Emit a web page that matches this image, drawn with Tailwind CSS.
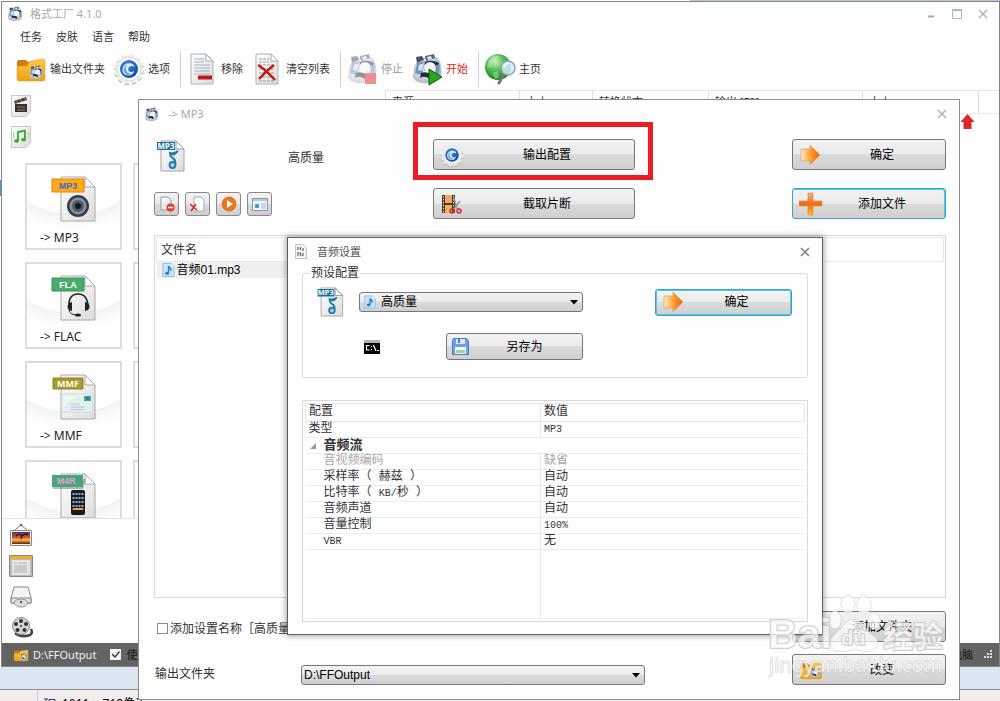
<!DOCTYPE html>
<html lang="zh-CN">
<head>
  <meta charset="UTF-8">
  <meta name="viewport" content="width=device-width, initial-scale=1.0">
  <title>格式工厂 4.1.0</title>
  <script src="https://cdn.jsdelivr.net/npm/@tailwindcss/browser@4"></script>
</head>
<body class="relative h-screen overflow-hidden bg-white font-['Noto_Sans','Noto_Sans_CJK_SC',sans-serif] text-[12px] leading-4 text-[#333]">

  <!-- shared icons -->
  <svg class="absolute h-0 w-0" aria-hidden="true">
    <defs>
      <linearGradient id="gFolder" x1="0" y1="0" x2="0" y2="1"><stop offset="0" stop-color="#fbc94a"/><stop offset="1" stop-color="#f0a010"/></linearGradient>
      <linearGradient id="gPage" x1="0" y1="0" x2="1" y2="1"><stop offset="0" stop-color="#fff"/><stop offset="1" stop-color="#dcdcdc"/></linearGradient>
      <linearGradient id="gArrow" x1="0" y1="0" x2="1" y2="0"><stop offset="0" stop-color="#ffe9c8"/><stop offset=".5" stop-color="#ffa030"/><stop offset="1" stop-color="#f85a00"/></linearGradient>
      <linearGradient id="gPlus" x1="0" y1="0" x2="0" y2="1"><stop offset="0" stop-color="#f9b08a"/><stop offset=".5" stop-color="#ee6a10"/><stop offset="1" stop-color="#fcc010"/></linearGradient>
      <linearGradient id="gSun" x1="0" y1="0" x2="0" y2="1"><stop offset="0" stop-color="#3b3a78"/><stop offset=".45" stop-color="#e2501c"/><stop offset=".65" stop-color="#ffc23c"/><stop offset="1" stop-color="#5a1a10"/></linearGradient>
      <radialGradient id="gGlobe" cx=".4" cy=".3" r=".7"><stop offset="0" stop-color="#c9f3c0"/><stop offset=".5" stop-color="#4fbb50"/><stop offset="1" stop-color="#178023"/></radialGradient>
      <radialGradient id="gBlue" cx=".4" cy=".3" r=".8"><stop offset="0" stop-color="#3d8fe0"/><stop offset="1" stop-color="#0a3f96"/></radialGradient>
      <radialGradient id="gRobot" cx=".4" cy=".4" r=".7"><stop offset="0" stop-color="#fff"/><stop offset="1" stop-color="#a9b2bd"/></radialGradient>
    </defs>
    <symbol id="robot" viewBox="0 0 32 32">
      <path d="M7 8Q3 12 3 20Q1 26 6 28Q14 32 24 28Q31 26 30 17Q30 9 26 5Q17 1 7 8Z" fill="url(#gRobot)" stroke="#a3abb5" stroke-width=".6"/>
      <path d="M5 4L11 3L13 7L6 10Z" fill="#4a525c"/>
      <path d="M14 3L23 1L24 5L15 8Z" fill="#5b636d"/>
      <path d="M16 4L20 3L21 6L17 7Z" fill="#dfe4ea"/>
      <path d="M6 10L14 8L11 22L4 20Z" fill="#6f95bf"/>
      <path d="M8 12L13 10L11 18L7 17Z" fill="#d4e6f8"/>
      <path d="M14 9Q21 6 28 10L26 16Q19 12 13 18Z" fill="#1c2b42"/>
      <circle cx="19" cy="15" r="6" fill="#f1f3f6"/>
      <path d="M25 12L29 12L28 22L24 21Z" fill="#6f95bf"/>
      <path d="M10 20Q16 18 21 22L19 26Q13 22 9 25Z" fill="#222c3a"/>
    </symbol>
    <symbol id="gear" viewBox="0 0 32 32">
      <circle cx="16" cy="17" r="13" fill="none" stroke="#a8a8a8" stroke-width="4" stroke-dasharray="4 2.800"/>
      <circle cx="16" cy="16" r="13" fill="#f6f6f6" stroke="#f0f0f0" stroke-width="4" stroke-dasharray="4 2.800"/>
      <circle cx="16" cy="16" r="12" fill="#f6f6f6" stroke="#c8c8c8" stroke-width=".6"/>
      <circle cx="16" cy="16" r="9" fill="url(#gBlue)"/>
      <path d="M10 20Q8 13 14 10.500Q20 9 22 14Q18.500 11.800 16 14Q14 16.500 16.500 18.500Q19 20 21 17.500Q20.500 22 16 22.500Q12 22.800 10 20Z" fill="#dcebfb"/>
      <path d="M11.500 20Q9.500 14 14.500 11.500Q11.500 15 13.500 18.500Q15.500 21.500 19 20.500Q15 23.500 11.500 20Z" fill="#5f9de0"/>
    </symbol>
    <symbol id="folder" viewBox="0 0 32 32">
      <path d="M2 9Q2 7 4 7H11L13 9H28Q30 9 30 11V26H2Z" fill="#d27b10"/>
      <path d="M3 13H12L15 8L28 6Q30 6 30 8V26Q30 28 28 28H4Q2 28 2 26V14Z" fill="url(#gFolder)" stroke="#e09a18" stroke-width=".5"/>
      <use href="#robot" x="13" y="12" width="16" height="15"/>
    </symbol>
    <symbol id="mp3file" viewBox="0 0 28 32">
      <path d="M4 1H19L27 9V31H4Z" fill="url(#gPage)" stroke="#a5a5a5"/>
      <path d="M19 1V9H27Z" fill="#fff" stroke="#999"/>
      <path d="M0 2H18V10H0Z" fill="#17709f"/>
      <text x="9" y="9" text-anchor="middle" font-family="Noto Sans" font-weight="bold" font-size="8" fill="#fff">MP3</text>
      <path d="M21 11Q18 14 13 13Q13 17 17 19Q19 21 18 25" fill="none" stroke="#1d7ba8" stroke-width="2"/>
      <path d="M14 14Q17 16 20 12" fill="none" stroke="#1d7ba8" stroke-width="1.500"/>
      <circle cx="15.500" cy="25" r="3" fill="#a9d3e6" stroke="#1d7ba8" stroke-width="1.800"/>
    </symbol>
    <symbol id="arrow" viewBox="0 0 24 24">
      <path d="M2 6H11V2L21 12L11 22V18H2Z" fill="url(#gArrow)" stroke="#c9a98a" stroke-width=".8"/>
    </symbol>
    <symbol id="note" viewBox="0 0 14 16">
      <path d="M1 1H10L13 4V15H1Z" fill="#cfe4fa" stroke="#8fb6de"/>
      <path d="M10 1V4H13Z" fill="#fff"/>
      <path d="M7 4V11M7 4Q10 6 9.500 9" fill="none" stroke="#0b7fd6" stroke-width="1.500"/>
      <ellipse cx="5.500" cy="11.500" rx="2.200" ry="1.700" fill="#0b7fd6"/>
    </symbol>
    <symbol id="page" viewBox="0 0 36 46">
      <path d="M1 1H25L35 11V45H1Z" fill="url(#gPage)" stroke="#aaa"/>
      <path d="M25 1V11H35Z" fill="#fff" stroke="#aaa"/>
    </symbol>
  </svg>

  <!-- what is left of the windows behind -->
  <div class="absolute inset-x-0 top-0 flex h-[2px] justify-end bg-white"><div class="w-[31%] bg-[#b7c6da]"></div></div>
  <div class="absolute left-0 top-[180px] h-4 w-px bg-[#3c96f5]"></div>
  <div class="absolute inset-x-0 bottom-0 flex h-[34px] flex-col bg-[#dce6f2]">
    <div class="mt-[22px] flex flex-1 items-start gap-[6px] overflow-hidden border-t border-[#8e8e8e] bg-[#f0edec] pl-[37px]">
      <span class="h-full w-px bg-[#ccc]"></span>
      <svg class="mt-[8px] h-3 w-3" viewBox="0 0 12 12"><path d="M0 1H4M2 1V12M5 1.500H11V12H5Z" fill="none" stroke="#24406e"/></svg>
      <span class="pt-[6px] text-[12px] text-black">1011 × 718像素</span>
    </div>
  </div>

  <!-- main window -->
  <main class="absolute bottom-[34px] left-px right-0 top-px flex flex-col border border-[#858585] bg-[#fefefe] text-[11px]">
    <header class="flex h-6 items-center pl-[5px] text-[#a8a8a8]">
      <svg class="h-4 w-4"><use href="#robot"/></svg>
      <h1 class="ml-[7px] flex-1">格式工厂 4.1.0</h1>
      <div class="flex items-center gap-[16px] pr-[11px]">
        <button aria-label="最小化"><svg class="h-[10px] w-[10px]" viewBox="0 0 10 10"><path d="M2 7.500H8" stroke="#aaa" stroke-width="2"/></svg></button>
        <button aria-label="最大化"><svg class="h-[10px] w-[10px]" viewBox="0 0 10 10"><path d="M.5 .5H9.500V9.500H.5Z M1 1.500H9" fill="none" stroke="#b5b5b5"/></svg></button>
        <button aria-label="关闭"><svg class="h-[10px] w-[10px]" viewBox="0 0 10 10"><path d="M1 1L9 9M9 1L1 9" stroke="#b0b0b0" stroke-width="1.400"/></svg></button>
      </div>
    </header>

    <nav class="flex h-[21px] items-center gap-[14px] pl-[18px]">
      <button>任务</button>
      <button>皮肤</button>
      <button>语言</button>
      <button>帮助</button>
    </nav>

    <div class="flex h-[43px] shrink-0 items-center gap-2 pl-[13px]">
      <button class="flex items-center gap-[3px]"><svg class="h-8 w-8"><use href="#folder"/></svg>输出文件夹</button>
      <button class="flex items-center gap-[3px]"><svg class="h-8 w-8"><use href="#gear"/></svg>选项</button>
      <span class="-mr-[3px] ml-[2px] h-9 w-px bg-[#d4d4d4]"></span>
      <button class="flex items-center gap-[3px]">
        <svg class="h-8 w-8" viewBox="0 0 32 32">
          <path d="M5 1H20L27 8V31H5Z" fill="url(#gPage)" stroke="#b0b0b0"/>
          <path d="M20 1V8H27Z" fill="#fff" stroke="#aaa"/>
          <path d="M8 6H18M8 9H18M8 12H24M8 15H24M8 18H24M8 21H24" stroke="#9fb3bd"/>
          <path d="M12 22.500H26V26.500H12Z" fill="#c01818"/>
        </svg>移除
      </button>
      <button class="flex items-center gap-[3px]">
        <svg class="h-8 w-8" viewBox="0 0 32 32">
          <path d="M5 1H20L27 8V31H5Z" fill="url(#gPage)" stroke="#b0b0b0"/>
          <path d="M20 1V8H27Z" fill="#fff" stroke="#aaa"/>
          <path d="M8 6H18M8 9H18M8 12H24M8 16H24M8 20H24M8 24H24M8 28H24" stroke="#999" stroke-dasharray="3 1"/>
          <path d="M7 12Q15 17 24 27M23 12Q15 18 8 26" fill="none" stroke="#c01c1c" stroke-width="2.600"/>
        </svg>清空列表
      </button>
      <span class="-mr-[3px] ml-[2px] h-9 w-px bg-[#d4d4d4]"></span>
      <button class="flex items-center gap-[3px] text-[#9a9a9a]">
        <svg class="h-8 w-8 opacity-50" viewBox="0 0 32 32"><use href="#robot"/><path d="M19 20H30V31H19Z" fill="#e02020"/></svg>停止
      </button>
      <button class="flex items-center gap-[3px] text-[#e02a12]">
        <svg class="h-8 w-8" viewBox="0 0 32 32"><use href="#robot"/><path d="M18 16L31 24L18 32Z" fill="#2aa81a" stroke="#0c5c08"/></svg>开始
      </button>
      <span class="-mr-[3px] ml-[2px] h-9 w-px bg-[#d4d4d4]"></span>
      <button class="flex items-center gap-[3px]">
        <svg class="h-8 w-8" viewBox="0 0 32 32">
          <circle cx="14" cy="14" r="13" fill="url(#gGlobe)"/>
          <path d="M5 7Q9 2 15 3L12 8L8 10L7 15L3 14Z M16 11L22 7L26 12L20 14Z M8 20L14 18L15 25L11 26Z" fill="#d8f5d0" opacity=".4"/>
          <path d="M20 21L15 30" stroke="#777" stroke-width="3" stroke-linecap="round"/>
          <circle cx="24" cy="15" r="7" fill="#d6eafa" fill-opacity=".85" stroke="#8aa2b5" stroke-width="1.500"/>
          <path d="M20 14Q21 10 25 10" fill="none" stroke="#fff" stroke-width="1.500"/>
        </svg>主页
      </button>
    </div>

    <div class="flex min-h-0 flex-1">
      <aside class="flex w-[383px] shrink-0 flex-col">
        <button aria-label="视频" class="flex h-[31px] items-center pl-[9px]">
          <svg class="h-[22px] w-[20px]" viewBox="0 0 20 22"><path d="M.5 .5H19.500V17L15 21.500H.5Z" fill="url(#gPage)" stroke="#c8c8c8"/><path d="M4 9H16V17H4Z" fill="#3a3026"/><path d="M3 6L15 2L16 5L4 9Z" fill="#4b4034"/><path d="M5 5.500L7 8M9 4L11 7M13 3L15 5.500M6 12H14M6 15H14" stroke="#a59c90" stroke-width=".8"/></svg>
        </button>
        <button aria-label="音频" class="flex h-[31px] items-center pl-[9px]">
          <svg class="h-[22px] w-[20px]" viewBox="0 0 20 22"><path d="M.5 .5H19.500V17L15 21.500H.5Z" fill="url(#gPage)" stroke="#c8c8c8"/><path d="M7 15V6L14 4.500V13.500" fill="none" stroke="#35a827" stroke-width="1.800"/><ellipse cx="5.500" cy="15" rx="2.400" ry="1.800" fill="#35a827"/><ellipse cx="12.500" cy="13.800" rx="2.400" ry="1.800" fill="#35a827"/><path d="M3 6Q1.500 9 3 12M17 6Q18.500 9 17 12" fill="none" stroke="#bbb"/></svg>
        </button>

        <div class="grid min-h-0 flex-1 auto-rows-[87px] grid-cols-[97px_97px] gap-x-[11px] gap-y-3 overflow-hidden border-b border-[#e2e2e2] pl-[23px] pt-[11px] text-[12px] text-[#222]">
          <button class="flex flex-col items-start border-2 border-[#dcdcdc] bg-[radial-gradient(ellipse_75%_60%_at_50%_0,#fff_97%,#f3f3f3_100%,#fff_130%)] pl-[13px] pt-[10px]">
            <svg class="h-[48px] w-[66px]" viewBox="0 0 66 48">
              <use href="#page" x="20" y="1" width="36" height="46"/>
              <path d="M12 4H44V17H12Z" fill="#ffab14" stroke="#d98a00"/>
              <text x="28" y="14" text-anchor="middle" font-family="Liberation Sans" font-weight="bold" font-size="9" fill="#4a63d0">MP3</text>
              <circle cx="38" cy="31" r="11" fill="#3a3d42"/><circle cx="38" cy="31" r="8.500" fill="#8593a4"/><circle cx="38" cy="31" r="6" fill="#4d5a68"/><circle cx="38" cy="31" r="3" fill="#12161b"/>
            </svg>
            <span class="mt-[7px]">-&gt; MP3</span>
          </button>
          <div class="border-2 border-[#dcdcdc]"></div>
          <button class="flex flex-col items-start border-2 border-[#dcdcdc] bg-[radial-gradient(ellipse_75%_60%_at_50%_0,#fff_97%,#f3f3f3_100%,#fff_130%)] pl-[13px] pt-[10px]">
            <svg class="h-[48px] w-[66px]" viewBox="0 0 66 48">
              <use href="#page" x="20" y="1" width="36" height="46"/>
              <path d="M12 4H44V17H12Z" fill="#4cab6c" stroke="#36905a"/>
              <text x="28" y="14" text-anchor="middle" font-family="Liberation Sans" font-weight="bold" font-size="9" fill="#fff">FLA</text>
              <path d="M29 34Q28 20 38 20Q48 20 48 34" fill="none" stroke="#222" stroke-width="1.600"/>
              <path d="M29 29L32 28V37L29 36Q26 33 29 29Z M48 29L45 28V37L48 36Q51 33 48 29Z" fill="#222"/>
              <path d="M29 36Q30 41 37 41" fill="none" stroke="#222"/><ellipse cx="38" cy="41" rx="3" ry="1.600" fill="#222"/>
            </svg>
            <span class="mt-[7px]">-&gt; FLAC</span>
          </button>
          <div class="border-2 border-[#dcdcdc]"></div>
          <button class="flex flex-col items-start border-2 border-[#dcdcdc] bg-[radial-gradient(ellipse_75%_60%_at_50%_0,#fff_97%,#f3f3f3_100%,#fff_130%)] pl-[13px] pt-[10px]">
            <svg class="h-[48px] w-[66px]" viewBox="0 0 66 48">
              <use href="#page" x="20" y="1" width="36" height="46"/>
              <path d="M13 5H43V16H13Z" fill="#aa9a2a" stroke="#8f8120"/>
              <text x="28" y="14" text-anchor="middle" font-family="Noto Sans" font-weight="bold" font-size="9" fill="#fff">MMF</text>
              <path d="M22 21H52V39H22Z" fill="#f0f6f6" stroke="#cbdadc"/>
              <path d="M23 38Q28 22 52 22V38Z" fill="#e2eef0"/>
              <path d="M44 23H51V28H44Z" fill="#3cb371"/><path d="M46 24H49V27H46Z" fill="#2a6fd0"/>
              <path d="M31 31H40M31 34H45M31 36.500H45" stroke="#b9c8cc"/>
            </svg>
            <span class="mt-[7px]">-&gt; MMF</span>
          </button>
          <div class="border-2 border-[#dcdcdc]"></div>
          <button class="flex flex-col items-start border-2 border-[#dcdcdc] bg-[radial-gradient(ellipse_75%_60%_at_50%_0,#fff_97%,#f3f3f3_100%,#fff_130%)] pl-[13px] pt-[10px]">
            <svg class="h-[48px] w-[66px]" viewBox="0 0 66 48">
              <use href="#page" x="20" y="1" width="36" height="46"/>
              <path d="M13 7H46L43 17H13Z" fill="#555" opacity=".4"/>
              <path d="M12 3H43V15H12Z" fill="#45a682"/>
              <text x="26" y="12" text-anchor="middle" font-family="Liberation Sans" font-weight="bold" font-size="9" fill="#f19ac8">M4R</text>
              <rect x="31" y="18" width="14" height="25" rx="2" fill="#1b1b1b"/>
              <path d="M33.500 21V38M36.500 21V38M39.500 21V38M42.500 21V38" stroke="#7fb4d8" stroke-width="2" stroke-dasharray="2 2"/>
              <path d="M33 37H43" stroke="#e8a040" stroke-width="2"/>
            </svg>
          </button>
          <div class="border-2 border-[#dcdcdc]"></div>
        </div>

        <button aria-label="图片" class="flex h-[31px] items-center pl-[8px]">
          <svg class="h-[24px] w-[22px]" viewBox="0 0 22 24"><path d="M5 7L11 2L17 7" fill="none" stroke="#777"/><circle cx="11" cy="2" r="1.300" fill="#8a5a3a"/><path d="M.5 7.500H21.500V22.500H.5Z" fill="#eee" stroke="#888"/><path d="M2 9H20V21H2Z" fill="url(#gSun)"/><path d="M6 13Q10 10 12 13Q15 10 18 12M12 13L11 16" fill="none" stroke="#1c1020" stroke-width="1.200"/></svg>
        </button>
        <button aria-label="文档" class="flex h-[31px] items-center pl-[7px]">
          <svg class="h-[22px] w-[24px]" viewBox="0 0 24 22"><path d="M.5 .5H23.500V21.500H.5Z" fill="#b9b9b9" stroke="#888"/><path d="M1 1H23V4H1Z" fill="#eeb02a"/><path d="M3 5H21V20H3Z" fill="#e6e6e6"/><path d="M5 8H8M9 8H18M5 11H18M5 13H18M5 15H18M5 17H18" stroke="#b0b0b0"/></svg>
        </button>
        <button aria-label="光驱设备" class="flex h-[31px] items-center pl-[8px]">
          <svg class="h-[22px] w-[22px]" viewBox="0 0 22 22"><path d="M4 1H18L21 12V17H1V12Z" fill="#f4f4f4" stroke="#888"/><path d="M1 12H21V17H1Z" fill="#e4e4e4" stroke="#888"/><path d="M4 16Q5 21 11 21Q17 21 18 16Q16 13 11 13Q6 13 4 16Z" fill="#ddd" stroke="#999"/><circle cx="11" cy="16" r="1.300" fill="#666"/></svg>
        </button>
        <button aria-label="高级" class="flex h-[31px] items-center pl-[9px]">
          <svg class="h-[22px] w-[22px]" viewBox="0 0 22 22"><path d="M4 16Q10 21 19 18Q22 16 20 12" fill="none" stroke="#444" stroke-width="2.500"/><circle cx="10" cy="9" r="8.500" fill="#d5d5d5" stroke="#888"/><g fill="#333"><circle cx="10" cy="4" r="2"/><circle cx="15" cy="7" r="2"/><circle cx="13.500" cy="13" r="2"/><circle cx="6.500" cy="13" r="2"/><circle cx="5" cy="7" r="2"/><circle cx="10" cy="9" r="1"/></g></svg>
        </button>
      </aside>

      <section class="min-w-0 flex-1">
        <table class="w-full table-fixed text-left">
          <thead>
            <tr class="h-[23px] border-y border-[#e8e8e8] *:border-l *:border-[#e0e0e0] *:p-0 *:pl-[6px] *:font-normal">
              <th class="w-[134px]">来源</th>
              <th class="w-[73px]">大小</th>
              <th class="w-[116px]">转换状态</th>
              <th class="w-[154px]">输出 [F2]</th>
              <th class="w-[116px]">大小</th>
              <th></th>
            </tr>
          </thead>
        </table>
        <div class="flex justify-end pr-[24px]">
          <svg class="h-4 w-[15px]" viewBox="0 0 15 16"><path d="M7.500 0L14.500 8H11.500V15H3.500V8H.5Z" fill="#d92626"/></svg>
        </div>
      </section>
    </div>

    <footer class="flex h-[23px] shrink-0 items-center bg-[#636363] pl-[11px] pr-[6px] text-[#151515]">
      <svg class="h-4 w-4"><use href="#folder"/></svg>
      <span class="ml-[4px] text-[#f0f0f0]">D:\FFOutput</span>
      <input id="threads" type="checkbox" class="ml-[14px] h-[11px] w-[11px] appearance-none bg-[#f4f4f4]" checked>
      <svg class="pointer-events-none -ml-[11px] h-[11px] w-[11px]" viewBox="0 0 11 11"><path d="M2 5L5 8L9.500 2.500" fill="none" stroke="#333" stroke-width="1.300"/></svg>
      <label for="threads" class="ml-[5px] flex-1">使用多线程</label>
      <span>关闭电脑</span>
      <svg class="ml-[10px] h-[10px] w-[10px]" viewBox="0 0 10 10" fill="#ddd"><path d="M7 0h2v2h-2zM7 3h2v2h-2zM4 3h2v2h-2zM7 6h2v2h-2zM4 6h2v2h-2zM1 6h2v2h-2z"/></svg>
    </footer>
  </main>

  <!-- "-> MP3" dialog -->
  <section class="absolute bottom-px left-[138px] right-[40px] top-[99px] flex flex-col border border-[#8c8c8c] bg-[#fefefe]">
    <header class="flex h-7 shrink-0 items-center pl-[5px] text-[11px] text-[#a8a8a8]">
      <svg class="h-[15px] w-[15px]"><use href="#robot"/></svg>
      <h2 class="ml-[9px] flex-1">-&gt; MP3</h2>
      <button aria-label="关闭" class="pr-[12px]"><svg class="h-[10px] w-[10px]" viewBox="0 0 10 10"><path d="M1 1L9 9M9 1L1 9" stroke="#b0b0b0" stroke-width="1.400"/></svg></button>
    </header>

    <div class="flex min-h-0 flex-1 flex-col pb-[14px] pl-[15px] pr-[13px] pt-[11px]">
      <div class="grid shrink-0 auto-rows-[31px] grid-cols-[134px_145px_202px_1fr_154px] items-center gap-y-[18px]">
        <svg class="ml-[3px] mt-[3px] h-8 w-7"><use href="#mp3file"/></svg>
        <span class="pt-[6px]">高质量</span>
        <div class="relative h-full">
          <button class="flex h-full w-full items-center rounded-[3px] border border-[#777] bg-[linear-gradient(#f3f3f3,#eaeaea_50%,#dbdbdb_50%,#cfcfcf)] pl-[6px] pr-[4px] text-black">
            <svg class="h-6 w-6"><use href="#gear"/></svg>
            <span class="flex-1">输出配置</span>
          </button>
          <div class="pointer-events-none absolute -bottom-[10px] -left-[20px] -right-[18px] -top-[17px] border-[5px] border-[#ed1c24]"></div>
        </div>
        <button class="col-start-5 flex h-full items-center rounded-[3px] border border-[#777] bg-[linear-gradient(#f3f3f3,#eaeaea_50%,#dbdbdb_50%,#cfcfcf)] pl-[6px] pr-[4px] text-black">
          <svg class="h-6 w-6"><use href="#arrow"/></svg>
          <span class="flex-1">确定</span>
        </button>

        <div class="col-span-2 flex gap-[6px]">
          <button aria-label="移除" class="flex h-6 w-[25px] items-center justify-center rounded-[3px] border border-[#8a8a8a] bg-[linear-gradient(#f3f3f3,#eaeaea_50%,#dbdbdb_50%,#cfcfcf)]">
            <svg class="h-4 w-4" viewBox="0 0 16 16"><path d="M2 1H9L12 4V14H2Z" fill="url(#gPage)" stroke="#999"/><circle cx="11.500" cy="11.500" r="4" fill="#e0402c"/><path d="M9 11.500H14" stroke="#fff" stroke-width="1.500"/></svg>
          </button>
          <button aria-label="清空列表" class="flex h-6 w-[25px] items-center justify-center rounded-[3px] border border-[#8a8a8a] bg-[linear-gradient(#f3f3f3,#eaeaea_50%,#dbdbdb_50%,#cfcfcf)]">
            <svg class="h-4 w-4" viewBox="0 0 16 16"><path d="M4 1H11L14 4V15H4Z" fill="#fff" stroke="#aaa"/><path d="M0 8L7 14M6 8L1 15" stroke="#e03020" stroke-width="1.600"/></svg>
          </button>
          <button aria-label="播放" class="flex h-6 w-[25px] items-center justify-center rounded-[3px] border border-[#8a8a8a] bg-[linear-gradient(#f3f3f3,#eaeaea_50%,#dbdbdb_50%,#cfcfcf)]">
            <svg class="h-4 w-4" viewBox="0 0 16 16"><circle cx="8" cy="8" r="7" fill="#ee7418" stroke="#d9701a"/><path d="M6 4L12 8L6 12Z" fill="#fff"/></svg>
          </button>
          <button aria-label="文件信息" class="flex h-6 w-[25px] items-center justify-center rounded-[3px] border border-[#8a8a8a] bg-[linear-gradient(#f3f3f3,#eaeaea_50%,#dbdbdb_50%,#cfcfcf)]">
            <svg class="h-4 w-4" viewBox="0 0 16 16"><path d="M.5 2.500H15.500V14.500H.5Z" fill="#f2f7fc" stroke="#8598ad"/><path d="M1 3H15V5H1Z" fill="#b9c8d9"/><path d="M3 8H7V12H3Z" fill="#3b9fe0"/><path d="M9 8H14M9 10H14M9 12H14" stroke="#a9b4c2"/></svg>
          </button>
        </div>
        <button class="flex h-full items-center rounded-[3px] border border-[#777] bg-[linear-gradient(#f3f3f3,#eaeaea_50%,#dbdbdb_50%,#cfcfcf)] pl-[6px] pr-[4px] text-black">
          <svg class="h-6 w-6" viewBox="0 0 24 24"><path d="M2 3H15V21H2Z" fill="#4a3a2c"/><path d="M5 3H12V11H5Z" fill="#f3a860"/><path d="M5 13H12V21H5Z" fill="#f0b050"/><path d="M3.500 4V21M13.500 4V21" stroke="#e8dccb" stroke-dasharray="1.500 1.500"/><path d="M14 6L17 17M20 9L14 17" stroke="#999" stroke-width="1.500"/><circle cx="12" cy="19" r="2" fill="none" stroke="#d02828" stroke-width="1.400"/><circle cx="19" cy="19" r="2" fill="none" stroke="#d02828" stroke-width="1.400"/></svg>
          <span class="flex-1">截取片断</span>
        </button>
        <button class="col-start-5 flex h-full items-center rounded-[3px] border border-[#3aa0cc] bg-[linear-gradient(#f3f3f3,#eaeaea_50%,#dbdbdb_50%,#cfcfcf)] pl-[6px] pr-[4px] text-black shadow-[inset_-1px_1px_0_#4fc8ee]">
          <svg class="h-6 w-6" viewBox="0 0 24 24"><path d="M9 1H14V9H23V14H14V23H9V14H0V9H9Z" fill="url(#gPlus)" stroke="#d98c50" stroke-width=".7"/></svg>
          <span class="flex-1">添加文件</span>
        </button>
      </div>

      <div class="mb-[13px] mt-4 min-h-0 flex-1 border border-[#d9d9d9] p-px">
        <table class="w-full text-left">
          <thead>
            <tr class="h-6 border border-[#e8e8e8]"><th class="p-0 pl-[4px] font-normal">文件名</th></tr>
          </thead>
          <tbody>
            <tr class="h-4 bg-[linear-gradient(to_right,#f0f0f0_30%,#fff_30%)]">
              <td class="p-0 pl-[5px]"><div class="flex items-center gap-[2px] font-['Liberation_Sans','Noto_Sans_CJK_SC',sans-serif] text-black"><svg class="h-4 w-[13px]"><use href="#note"/></svg>音频01.mp3</div></td>
            </tr>
          </tbody>
        </table>
      </div>

      <div class="grid shrink-0 auto-rows-[31px] grid-cols-[147px_344px_1fr_154px] items-center gap-y-3">
        <div class="col-span-2 flex items-center gap-[2px] pl-[3px] pt-[4px]">
          <input id="addName" type="checkbox" class="h-[11px] w-[11px] appearance-none border border-[#8a8a8a] bg-white checked:bg-[#777]">
          <label for="addName">添加设置名称［高质量］</label>
        </div>
        <button class="col-start-4 flex h-full items-center rounded-[3px] border border-[#777] bg-[linear-gradient(#f3f3f3,#eaeaea_50%,#dbdbdb_50%,#cfcfcf)] pl-[6px] pr-[4px] text-black">
          <svg class="h-6 w-6"><use href="#folder"/></svg>
          <span class="flex-1">添加文件夹</span>
        </button>
        <label for="outDir" class="pl-[1px] pt-[8px]">输出文件夹</label>
        <div class="relative pt-[11px]">
          <select id="outDir" class="block h-5 w-full appearance-none rounded-[3px] border border-[#777] bg-[linear-gradient(#f3f3f3,#eaeaea_50%,#dbdbdb_50%,#cfcfcf)] pl-[2px] font-['Liberation_Sans',sans-serif] text-[12px] leading-4 text-black">
            <option>D:\FFOutput</option>
          </select>
          <svg class="pointer-events-none absolute bottom-[7px] right-[5px] h-[5px] w-[8px]" viewBox="0 0 8 5"><path d="M0 0H8L4 4.500Z" fill="#000"/></svg>
        </div>
        <button class="col-start-4 flex h-full items-center rounded-[3px] border border-[#777] bg-[linear-gradient(#f3f3f3,#eaeaea_50%,#dbdbdb_50%,#cfcfcf)] pl-[6px] pr-[4px] text-black">
          <svg class="h-6 w-6"><use href="#folder"/></svg>
          <span class="flex-1">改变</span>
        </button>
      </div>
    </div>
  </section>

  <!-- audio settings dialog -->
  <section class="absolute left-[287px] top-[237px] flex h-[398px] w-[536px] flex-col border border-[#5f5f5f] bg-[#fefefe] pb-3 pl-[14px] pr-[14px] shadow-[0_0_6px_1px_rgba(0,0,0,0.35)]">
    <header class="-mx-[7px] flex h-[27px] shrink-0 items-center text-[11px] text-[#555]">
      <svg class="h-[15px] w-[12px]" viewBox="0 0 12 15"><path d="M.5 .5H8L11.500 4V14.500H.5Z" fill="#f4f4f4" stroke="#c5c5c5"/><path d="M3 3V6M5 6L6 3M8 4V7M3 8V12M5 8L6 12M8 9V12" stroke="#444"/></svg>
      <h2 class="ml-[10px] flex-1">音频设置</h2>
      <button aria-label="关闭" class="pr-[5px]"><svg class="h-[10px] w-[10px]" viewBox="0 0 10 10"><path d="M1 1L9 9M9 1L1 9" stroke="#777" stroke-width="1.400"/></svg></button>
    </header>

    <fieldset class="rounded-[3px] border border-[#dcdcdc] pb-[17px] pl-[14px] pr-[15px]">
      <legend class="-ml-[7px] px-[1px] leading-4">预设配置</legend>
      <div class="grid grid-cols-[42px_224px_1fr] items-center gap-y-4 pt-[6px]">
        <svg class="h-[30px] w-[27px]" viewBox="0 0 28 32"><use href="#mp3file"/></svg>
        <div class="relative">
          <select aria-label="预设配置" class="block h-5 w-full appearance-none rounded-[3px] border border-[#777] bg-[linear-gradient(#f3f3f3,#eaeaea_50%,#dbdbdb_50%,#cfcfcf)] pl-[21px] text-[12px] leading-4 text-black">
            <option>高质量</option>
          </select>
          <svg class="pointer-events-none absolute left-[5px] top-[3px] h-[14px] w-[12px]"><use href="#note"/></svg>
          <svg class="pointer-events-none absolute right-[5px] top-[8px] h-[5px] w-[8px]" viewBox="0 0 8 5"><path d="M0 0H8L4 4.500Z" fill="#000"/></svg>
        </div>
        <button class="flex h-[27px] w-[137px] items-center justify-self-end rounded-[3px] border border-[#3aa0cc] bg-[linear-gradient(#f3f3f3,#eaeaea_50%,#dbdbdb_50%,#cfcfcf)] pl-[6px] pr-[4px] text-black shadow-[inset_0_0_0_1px_#4fc8ee]">
          <svg class="h-6 w-6"><use href="#arrow"/></svg>
          <span class="flex-1">确定</span>
        </button>

        <div class="col-start-2 flex items-center justify-between pl-[5px]">
          <svg class="h-[14px] w-4" viewBox="0 0 16 14"><path d="M0 0H16V14H0Z" fill="#000"/><path d="M0 0H16V3H0Z" fill="#a9b8c8"/><path d="M5.500 5.500H2.500V10H5.500M7.500 6V7M7.500 9V10M9.500 5L12 11M13 10.500H15" fill="none" stroke="#fff" stroke-width="1.200"/></svg>
          <button class="flex h-[27px] w-[137px] items-center rounded-[3px] border border-[#777] bg-[linear-gradient(#f3f3f3,#eaeaea_50%,#dbdbdb_50%,#cfcfcf)] pl-[5px] pr-[2px] text-black">
            <svg class="h-[17px] w-[17px]" viewBox="0 0 17 17"><path d="M1.500 .5H14.500L16.500 2.500V16.500H.5V1.500Z" fill="#6f9fe6" stroke="#4a78c4"/><path d="M4 1H13V6H4Z" fill="#dce9fa"/><path d="M6 1H8V5H6Z" fill="#4a78c4"/><path d="M3 9H14V16H3Z" fill="#eef5ff"/><path d="M4 12H13V15H4Z" fill="#a7d08c"/></svg>
            <span class="flex-1">另存为</span>
          </button>
        </div>
      </div>
    </fieldset>

    <div class="mt-[22px] min-h-0 flex-1 border border-[#d9d9d9] p-[2px]">
      <table class="h-full w-full table-fixed text-left font-['Liberation_Mono','Noto_Sans_CJK_SC',monospace] text-[12px] leading-[15px] *:*:*:p-0 *:*:*:pl-[3px] *:*:*:font-normal">
        <thead>
          <tr class="h-[18px] border border-[#e8e8e8]"><th class="w-[235px]">配置</th><th class="border-l border-[#e8e8e8]">数值</th></tr>
        </thead>
        <tbody class="*:border-b *:border-[#ececec]">
          <tr class="h-4"><td>类型</td><td class="border-l border-[#e8e8e8] text-[10px]">MP3</td></tr>
          <tr class="h-4">
            <td colspan="2"><div class="flex items-center gap-[8px] pl-px text-[13px] font-bold"><svg class="h-[6px] w-[6px]" viewBox="0 0 6 6"><path d="M6 0V6H0Z" fill="#999"/></svg>音频流</div></td>
          </tr>
          <tr class="h-4 text-[#a8a8a8]"><td><div class="pl-[15px]">音视频编码</div></td><td class="border-l border-[#e8e8e8]">缺省</td></tr>
          <tr class="h-4"><td><div class="pl-[15px]">采样率（ 赫兹 ）</div></td><td class="border-l border-[#e8e8e8]">自动</td></tr>
          <tr class="h-4"><td><div class="pl-[15px]">比特率（ <span class="text-[10px]">KB/</span>秒 ）</div></td><td class="border-l border-[#e8e8e8]">自动</td></tr>
          <tr class="h-4"><td><div class="pl-[15px]">音频声道</div></td><td class="border-l border-[#e8e8e8]">自动</td></tr>
          <tr class="h-4"><td><div class="pl-[15px]">音量控制</div></td><td class="border-l border-[#e8e8e8] text-[10px]">100%</td></tr>
          <tr class="h-4"><td><div class="pl-[15px] text-[10px]">VBR</div></td><td class="border-l border-[#e8e8e8]">无</td></tr>
          <tr class="h-full"><td></td><td class="border-l border-[#e8e8e8]"></td></tr>
        </tbody>
      </table>
    </div>
  </section>

  <!-- watermark -->
  <svg class="pointer-events-none absolute bottom-[17px] right-[48px] h-[92px] w-[184px]" viewBox="0 0 184 92" fill="#fff" fill-opacity=".7" stroke="#c4c4c4" stroke-opacity=".8" paint-order="stroke">
    <ellipse cx="67" cy="28" rx="6" ry="9"/>
    <ellipse cx="80" cy="12" rx="7" ry="9"/>
    <ellipse cx="96" cy="13" rx="7" ry="9"/>
    <ellipse cx="106" cy="29" rx="6" ry="8"/>
    <path d="M74 36Q82 22 94 31Q100 41 108 46Q112 55 105 58Q97 61 87 57Q75 61 66 58Q59 50 66 43Z"/>
    <text x="0" y="56" font-family="Liberation Sans" font-weight="bold" font-size="41" stroke-width="2">Bai</text>
    <text x="73" y="53" font-family="Liberation Sans" font-weight="bold" font-size="20" stroke-width="2">du</text>
    <text x="115" y="55" font-family="Noto Sans CJK SC" font-weight="bold" font-size="30" stroke-width="2">经验</text>
    <text x="1" y="80" font-family="Noto Sans" font-size="20" stroke-width="1">jingyan.baidu.com</text>
  </svg>
</body>
</html>
